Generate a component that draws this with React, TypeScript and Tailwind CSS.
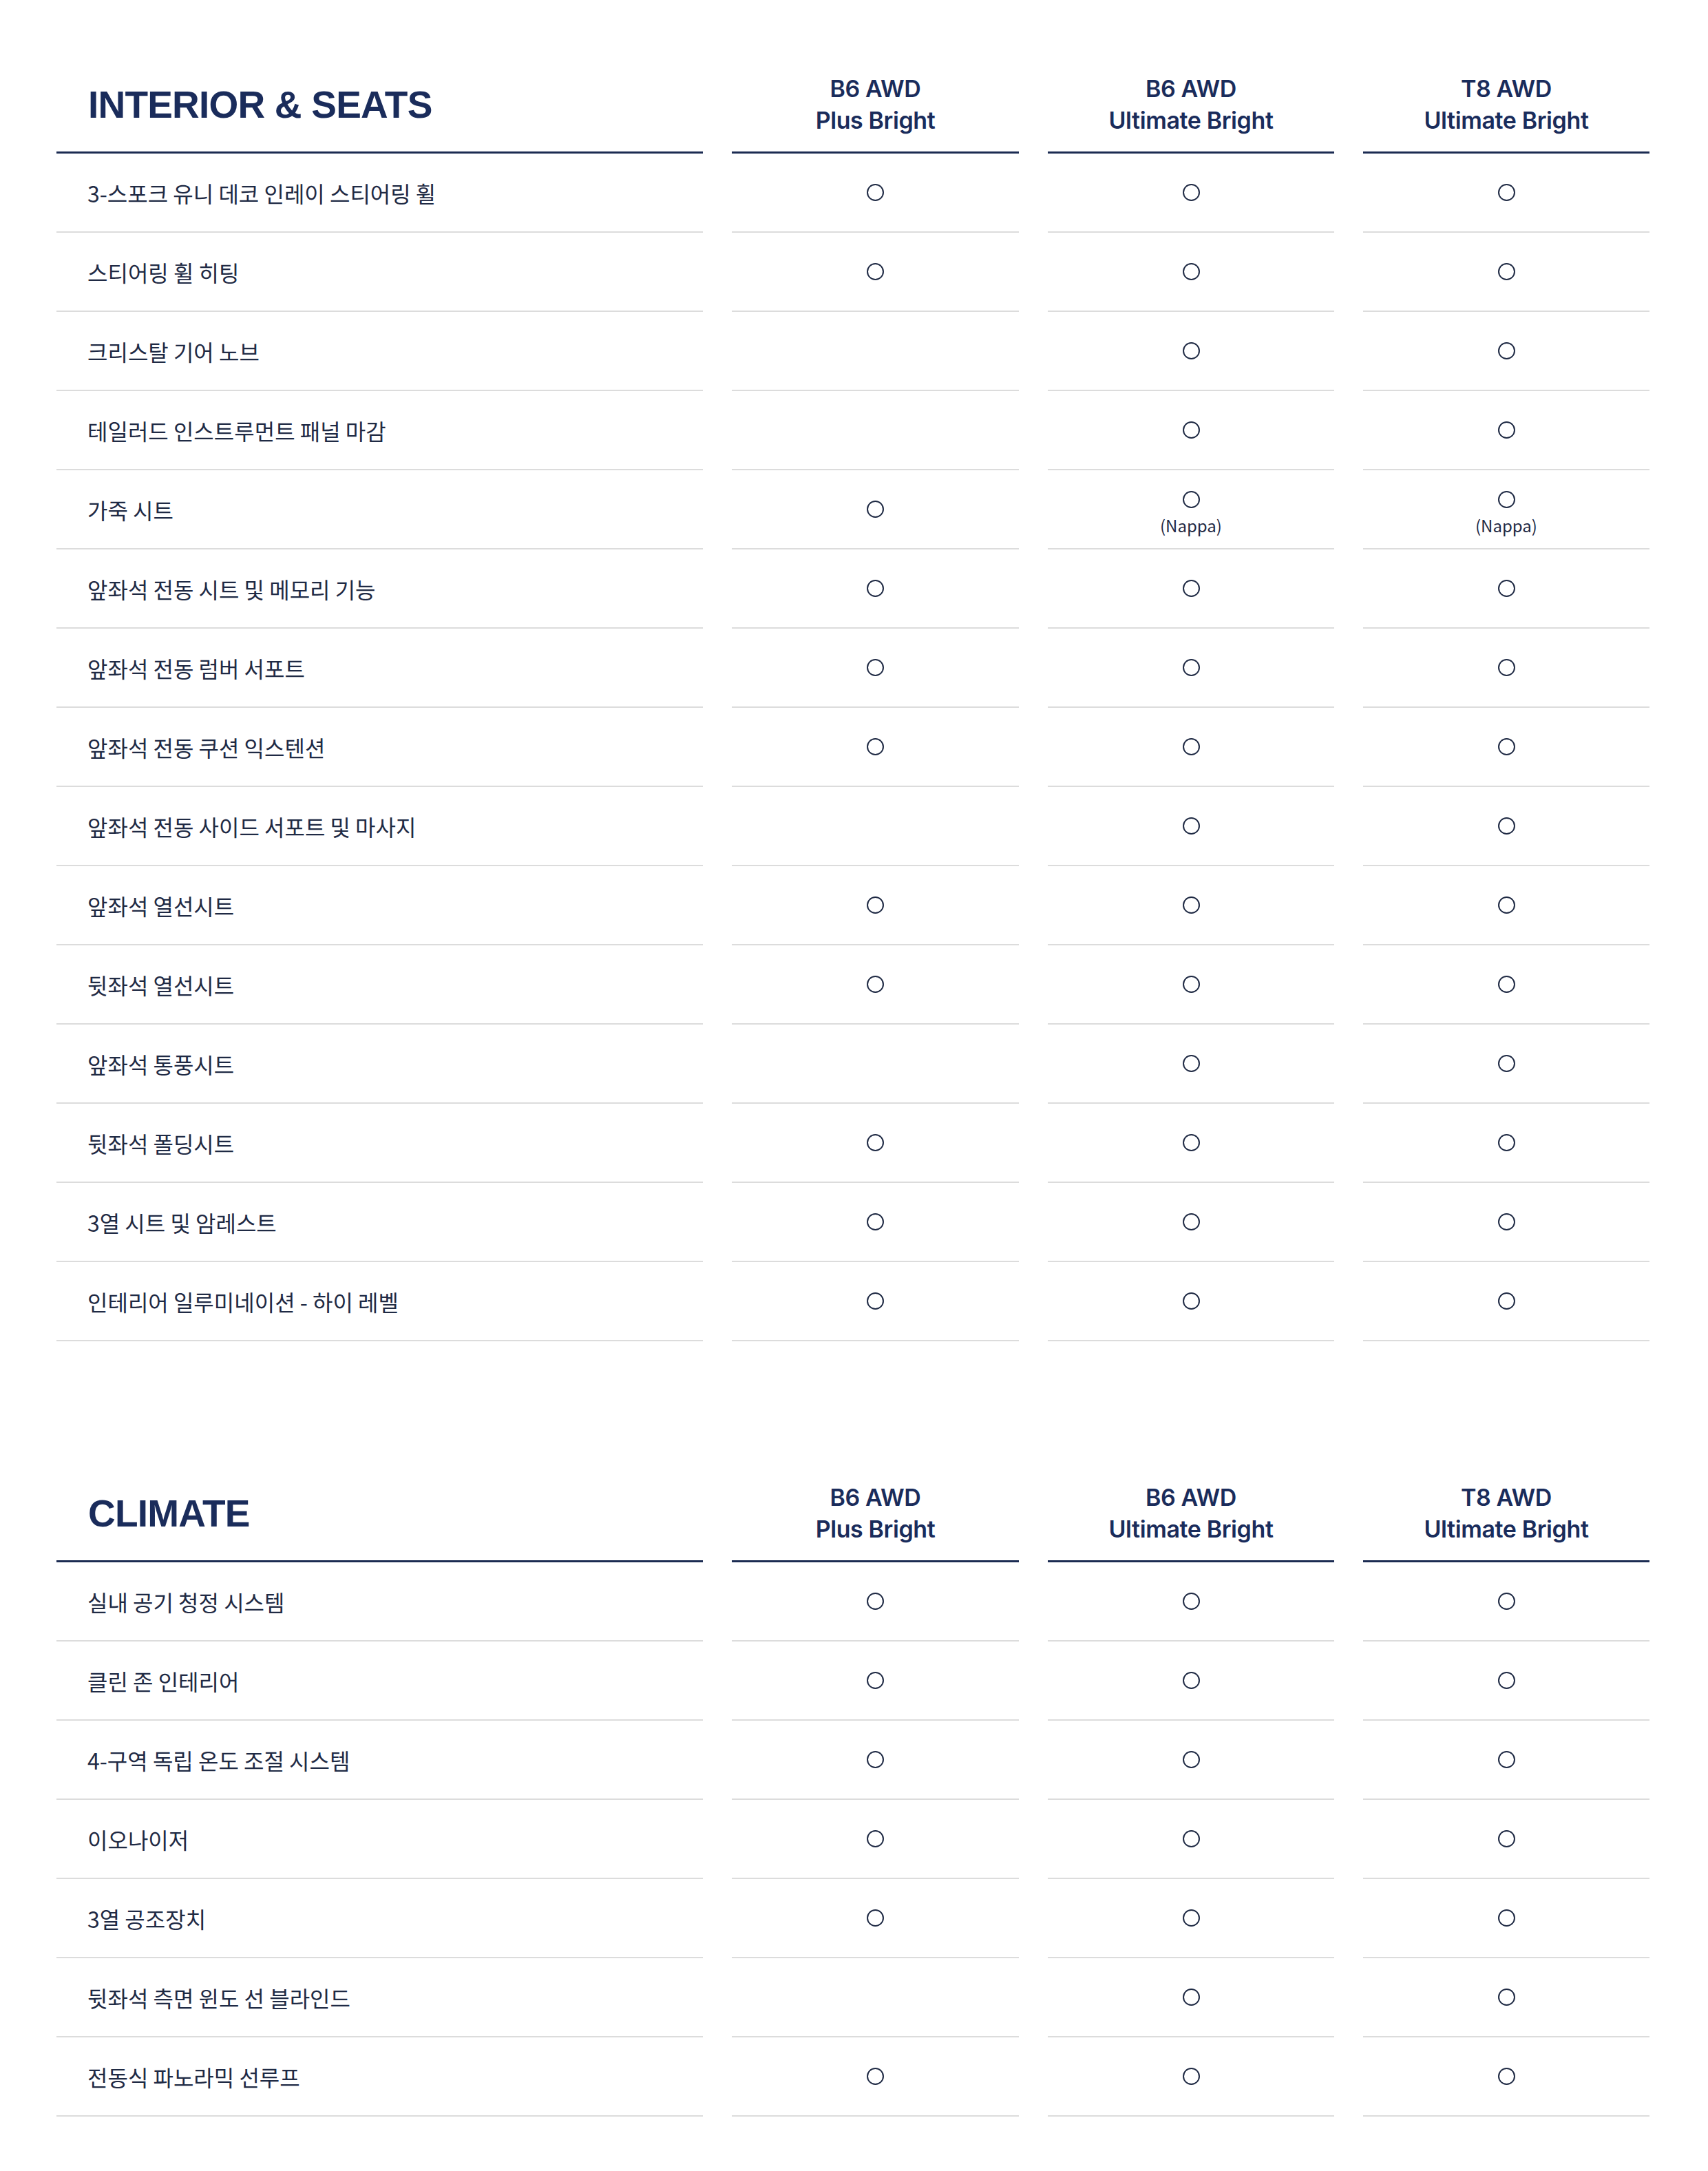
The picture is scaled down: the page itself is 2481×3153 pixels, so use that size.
import React from 'react';

type Cell = boolean | string;

interface Row {
  label: string;
  values: [Cell, Cell, Cell];
}

interface Section {
  title: string;
  rows: Row[];
}

const trims = [
  ['B6 AWD', 'Plus Bright'],
  ['B6 AWD', 'Ultimate Bright'],
  ['T8 AWD', 'Ultimate Bright'],
];

const sections: Section[] = [
  {
    title: 'INTERIOR & SEATS',
    rows: [
      { label: '3-스포크 유니 데코 인레이 스티어링 휠', values: [true, true, true] },
      { label: '스티어링 휠 히팅', values: [true, true, true] },
      { label: '크리스탈 기어 노브', values: [false, true, true] },
      { label: '테일러드 인스트루먼트 패널 마감', values: [false, true, true] },
      { label: '가죽 시트', values: [true, '(Nappa)', '(Nappa)'] },
      { label: '앞좌석 전동 시트 및 메모리 기능', values: [true, true, true] },
      { label: '앞좌석 전동 럼버 서포트', values: [true, true, true] },
      { label: '앞좌석 전동 쿠션 익스텐션', values: [true, true, true] },
      { label: '앞좌석 전동 사이드 서포트 및 마사지', values: [false, true, true] },
      { label: '앞좌석 열선시트', values: [true, true, true] },
      { label: '뒷좌석 열선시트', values: [true, true, true] },
      { label: '앞좌석 통풍시트', values: [false, true, true] },
      { label: '뒷좌석 폴딩시트', values: [true, true, true] },
      { label: '3열 시트 및 암레스트', values: [true, true, true] },
      { label: '인테리어 일루미네이션 - 하이 레벨', values: [true, true, true] },
    ],
  },
  {
    title: 'CLIMATE',
    rows: [
      { label: '실내 공기 청정 시스템', values: [true, true, true] },
      { label: '클린 존 인테리어', values: [true, true, true] },
      { label: '4-구역 독립 온도 조절 시스템', values: [true, true, true] },
      { label: '이오나이저', values: [true, true, true] },
      { label: '3열 공조장치', values: [true, true, true] },
      { label: '뒷좌석 측면 윈도 선 블라인드', values: [false, true, true] },
      { label: '전동식 파노라믹 선루프', values: [true, true, true] },
    ],
  },
];

const Dot = () => (
  <div className="w-[25px] h-[25px] rounded-full border-[2px] border-[#1f2a44]" />
);

const ValueCell: React.FC<{ value: Cell }> = ({ value }) => {
  if (typeof value === 'string') {
    // circle with a small note underneath (e.g. Nappa leather)
    return (
      <div className="h-[115px] border-b-2 border-[#dcdcdc] flex flex-col items-center justify-center pt-[14px]">
        <Dot />
        <span className="mt-[8px] text-[24px] leading-[34px] text-[#1f2a44]">{value}</span>
      </div>
    );
  }
  return (
    <div className="h-[115px] border-b-2 border-[#dcdcdc] flex items-center justify-center">
      {value && <Dot />}
    </div>
  );
};

const SpecTable: React.FC<{ section: Section; className?: string }> = ({ section, className }) => (
  <div className={`grid grid-cols-[939px_417px_416px_416px] gap-x-[42px] ${className ?? ''}`}>
    <div className="h-[139px] border-b-[3px] border-[#1b2b52] flex items-center pl-[46px]">
      <h2 className="text-[55px] font-bold tracking-[-0.8px] text-[#1a2c5b] font-['Liberation_Sans',sans-serif]">
        {section.title}
      </h2>
    </div>
    {trims.map(([a, b], i) => (
      <div
        key={i}
        className="h-[139px] border-b-[3px] border-[#1b2b52] flex flex-col items-center justify-center text-[34px] leading-[46px] font-semibold text-[#1a2c5b] font-['Inter',sans-serif] tracking-[-0.4px]"
      >
        <span>{a}</span>
        <span>{b}</span>
      </div>
    ))}
    {section.rows.map((row) => (
      <React.Fragment key={row.label}>
        <div className="h-[115px] border-b-2 border-[#dcdcdc] flex items-center pl-[45px] text-[32px] text-[#1f2a44]">
          {row.label}
        </div>
        {row.values.map((v, i) => (
          <ValueCell key={i} value={v} />
        ))}
      </React.Fragment>
    ))}
  </div>
);

export default function App() {
  return (
    <div className="w-[2481px] min-h-[3153px] bg-white pl-[82px] pr-[84px] pt-[84px] pb-[74px] font-['Noto_Sans_CJK_KR','Noto_Sans',sans-serif]">
      <SpecTable section={sections[0]} />
      <SpecTable section={sections[1]} className="mt-[182px]" />
    </div>
  );
}
